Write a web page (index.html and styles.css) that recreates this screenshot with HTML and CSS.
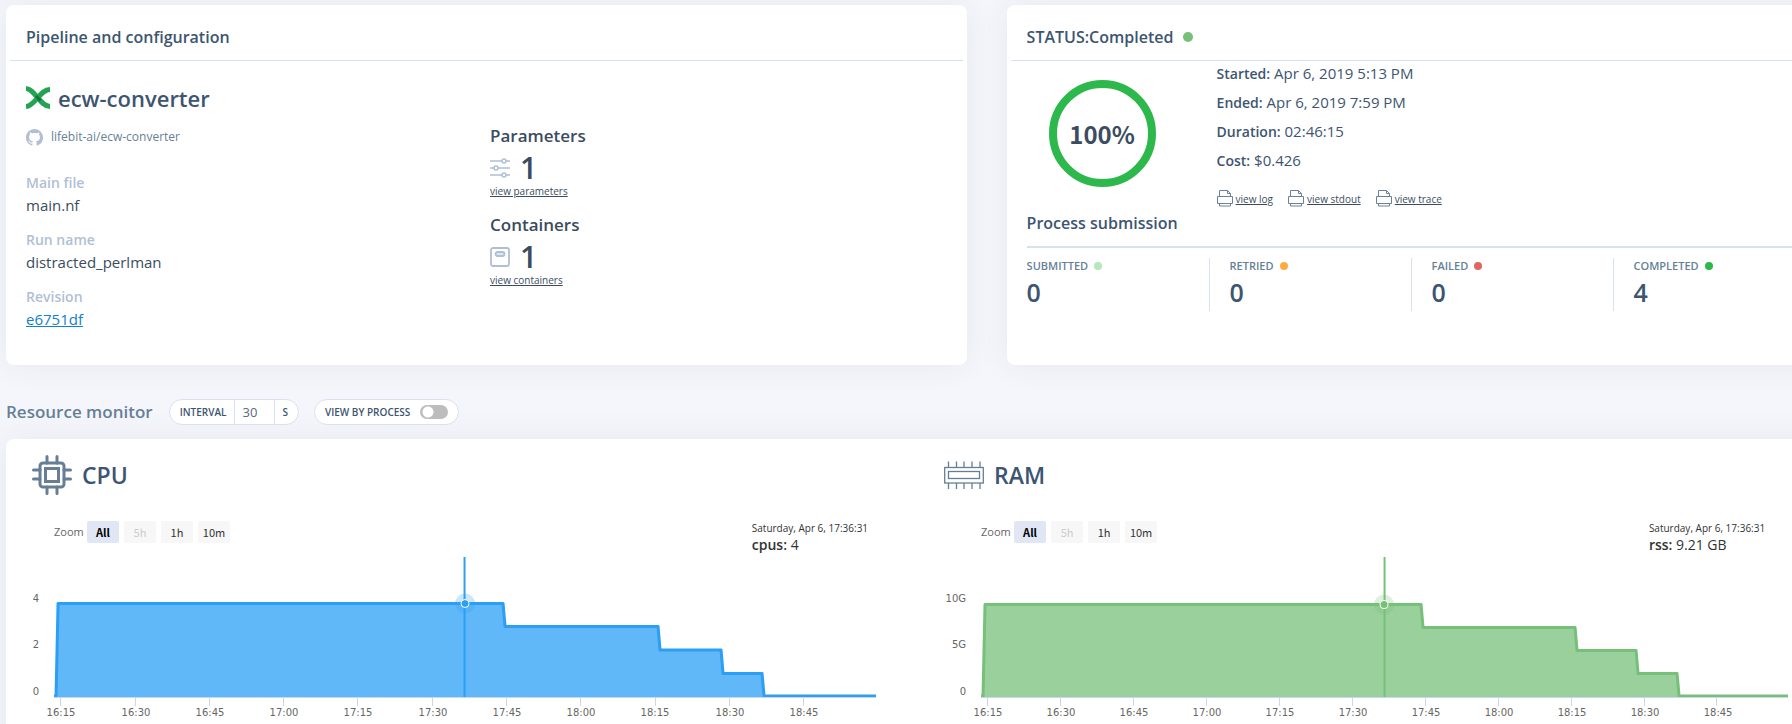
FILE: index.html
```html
<!DOCTYPE html>
<html lang="en">
<head>
<meta charset="utf-8">
<title>ecw-converter</title>
<link rel="stylesheet" href="styles.css">
</head>
<body>
<svg class="defs" aria-hidden="true">
  <symbol id="printer" viewBox="0 0 16 17">
    <path d="M2.500 6.500V.500H10.500L13.500 3.500V6.500M10.500 .500V3.500H13.500M.500 6.500H15.500V13.500H.500ZM2.500 13.500V16H13.500V13.500" fill="none" stroke="#6b829a"/>
  </symbol>
</svg>
<main class="page">
  <div class="cards">
    <section class="card">
      <header class="card-head"><h2>Pipeline and configuration</h2></header>
      <div class="pipeline">
        <div class="pipeline-info">
          <div class="name">
            <svg width="24" height="24" viewBox="0 0 24 24"><path d="M0 2.500C9 3 14 20.500 24 20.500M0 20.500C9 20 14 3.500 24 3.500" fill="none" stroke="#23a455" stroke-width="5"/><path d="M10 10L14.500 14.500" stroke="#14723a" stroke-width="3"/></svg>
            <h1>ecw-converter</h1>
          </div>
          <div class="repo">
            <svg width="17" height="17" viewBox="0 0 16 16" fill="#b0bfd4"><path d="M8 0C3.580 0 0 3.580 0 8c0 3.540 2.290 6.530 5.470 7.590.4.070.55-.17.55-.38 0-.19-.01-.82-.01-1.490-2.010.37-2.530-.49-2.690-.94-.09-.23-.48-.94-.82-1.130-.28-.15-.68-.52-.01-.53.63-.01 1.080.58 1.230.82.72 1.210 1.870.87 2.330.66.07-.52.28-.87.51-1.070-1.780-.2-3.640-.89-3.640-3.950 0-.87.31-1.590.82-2.150-.08-.2-.36-1.020.08-2.120 0 0 .67-.21 2.200.82.64-.18 1.320-.27 2-.27s1.360.09 2 .27c1.530-1.040 2.200-.82 2.200-.82.44 1.100.16 1.920.08 2.120.51.56.82 1.270.82 2.150 0 3.070-1.870 3.750-3.650 3.950.29.25.54.73.54 1.480 0 1.070-.01 1.930-.01 2.200 0 .21.15.46.55.38A8.010 8.010 0 0 0 16 8c0-4.420-3.580-8-8-8z"/></svg>
            <span>lifebit-ai/ecw-converter</span>
          </div>
          <dl class="facts">
            <dt>Main file</dt><dd>main.nf</dd>
            <dt>Run name</dt><dd>distracted_perlman</dd>
            <dt>Revision</dt><dd><a class="revision" href="#">e6751df</a></dd>
          </dl>
        </div>
        <div class="counts">
          <div class="count">
            <h3>Parameters</h3>
            <p class="count-value"><svg width="20" height="20" viewBox="0 0 20 20" fill="none" stroke="#b0bfd4" stroke-width="1.500"><path d="M0 3H12M16 3H20M0 10H4M8 10H20M0 17H12M16 17H20"/><circle cx="14" cy="3" r="2"/><circle cx="6" cy="10" r="2"/><circle cx="14" cy="17" r="2"/></svg>1</p>
            <a class="small-link" href="#">view parameters</a>
          </div>
          <div class="count">
            <h3>Containers</h3>
            <p class="count-value"><svg width="20" height="20" viewBox="0 0 20 20" fill="none" stroke="#b0bfd4" stroke-width="1.800"><rect x="1" y="1" width="18" height="18" rx="2"/><rect x="5.500" y="5" width="9" height="4" rx="2" fill="#dfe6f0"/></svg>1</p>
            <a class="small-link" href="#">view containers</a>
          </div>
        </div>
      </div>
    </section>

    <section class="card">
      <header class="card-head"><h2>STATUS:Completed</h2><span class="dot dot-status"></span></header>
      <div class="status">
        <div class="ring">100%</div>
        <div class="run">
          <p><b>Started:</b> Apr 6, 2019 5:13 PM</p>
          <p><b>Ended:</b> Apr 6, 2019 7:59 PM</p>
          <p><b>Duration:</b> 02:46:15</p>
          <p><b>Cost:</b> $0.426</p>
          <div class="logs">
            <a class="small-link" href="#"><svg width="16" height="17"><use href="#printer"/></svg>view log</a>
            <a class="small-link" href="#"><svg width="16" height="17"><use href="#printer"/></svg>view stdout</a>
            <a class="small-link" href="#"><svg width="16" height="17"><use href="#printer"/></svg>view trace</a>
          </div>
        </div>
      </div>
      <div class="submission">
        <h2>Process submission</h2>
        <ul class="stats">
          <li><span class="stat-label">SUBMITTED<i class="dot dot-submitted"></i></span><strong>0</strong></li>
          <li><span class="stat-label">RETRIED<i class="dot dot-retried"></i></span><strong>0</strong></li>
          <li><span class="stat-label">FAILED<i class="dot dot-failed"></i></span><strong>0</strong></li>
          <li><span class="stat-label">COMPLETED<i class="dot dot-completed"></i></span><strong>4</strong></li>
        </ul>
      </div>
    </section>
  </div>

  <div class="toolbar">
    <h2>Resource monitor</h2>
    <div class="pill interval"><label for="interval">INTERVAL</label><input id="interval" type="text" value="30"><span>S</span></div>
    <label class="pill process">VIEW BY PROCESS<input class="switch" type="checkbox"></label>
  </div>

  <section class="card monitors">
    <article class="monitor">
      <header class="monitor-head">
        <svg width="40" height="40" viewBox="0 0 40 40" fill="none" stroke="#667f96"><rect x="8" y="8" width="24" height="24" rx="3" stroke-width="3"/><rect x="13.500" y="13.500" width="13" height="13" stroke-width="3"/><path d="M15 8V1.500M25 8V1.500M15 32V38.500M25 32V38.500M8 15H1.500M8 24H1.500M32 15H38.500M32 24H38.500" stroke-width="3" stroke-linecap="round"/></svg>
        <h2>CPU</h2>
      </header>
      <div class="chart-bar cpu-bar">
        <div class="ranges"><span>Zoom</span><button class="active">All</button><button disabled>5h</button><button>1h</button><button>10m</button></div>
        <div class="readout"><small>Saturday, Apr 6, 17:36:31</small><p><b>cpus:</b> 4</p></div>
      </div>
      <svg class="chart cpu" viewBox="0 0 912 168" role="img" aria-label="CPU usage">
        <path class="area" d="M50 139.500L52 46.500H497L499 69.500H652L654 93H715L717 116.500H756L758 140H50Z"/>
        <path class="line" d="M48 139H50L52 46.500H497L499 69.500H652L654 93H715L717 116.500H756L758 139H870"/>
        <path class="axis" d="M48 140.500H870M54.500 141V149M129.500 141V149M203.500 141V149M277.500 141V149M351.500 141V149M426.500 141V149M500.500 141V149M574.500 141V149M649.500 141V149M723.500 141V149M797.500 141V149"/>
        <path class="cursor" d="M458.500 0V140"/>
        <circle class="halo" cx="459" cy="46.500" r="10"/><circle class="point" cx="459" cy="46.500" r="4"/>
        <g class="y-labels"><text x="33" y="45">4</text><text x="33" y="91">2</text><text x="33" y="138">0</text></g>
        <g class="x-labels"><text x="55" y="159">16:15</text><text x="130" y="159">16:30</text><text x="204" y="159">16:45</text><text x="278" y="159">17:00</text><text x="352" y="159">17:15</text><text x="427" y="159">17:30</text><text x="501" y="159">17:45</text><text x="575" y="159">18:00</text><text x="649" y="159">18:15</text><text x="724" y="159">18:30</text><text x="798" y="159">18:45</text></g>
      </svg>
    </article>
    <article class="monitor">
      <header class="monitor-head">
        <svg width="40" height="40" viewBox="0 0 40 40" fill="none" stroke="#667f96" stroke-width="1.300"><rect x=".7" y="12.500" width="38.600" height="15.500"/><rect x="4.500" y="16.500" width="31" height="7"/><path d="M4.500 12.500V6.500M12.500 12.500V6.500M20 12.500V6.500M28 12.500V6.500M36 12.500V6.500M4.500 28V34M12.500 28V34M20 28V34M28 28V34M36 28V34"/></svg>
        <h2>RAM</h2>
      </header>
      <div class="chart-bar ram-bar">
        <div class="ranges"><span>Zoom</span><button class="active">All</button><button disabled>5h</button><button>1h</button><button>10m</button></div>
        <div class="readout"><small>Saturday, Apr 6, 17:36:31</small><p><b>rss:</b> 9.21 GB</p></div>
      </div>
      <svg class="chart ram" viewBox="0 0 912 168" role="img" aria-label="RAM usage">
        <path class="area" d="M65 139.500L67 47.500H503L505 70.500H657L659 93.500H718L720 116.500H759L761 140H65Z"/>
        <path class="line" d="M63 139H65L67 47.500H503L505 70.500H657L659 93.500H718L720 116.500H759L761 139H870"/>
        <path class="axis" d="M63 140.500H870M69.500 141V149M142.500 141V149M215.500 141V149M288.500 141V149M361.500 141V149M434.500 141V149M507.500 141V149M580.500 141V149M653.500 141V149M726.500 141V149M798.500 141V149"/>
        <path class="cursor" d="M466.500 0V140"/>
        <circle class="halo" cx="466" cy="47.500" r="10"/><circle class="point" cx="466" cy="47.500" r="4"/>
        <g class="y-labels"><text x="48" y="45">10G</text><text x="48" y="91">5G</text><text x="48" y="138">0</text></g>
        <g class="x-labels"><text x="70" y="159">16:15</text><text x="143" y="159">16:30</text><text x="216" y="159">16:45</text><text x="289" y="159">17:00</text><text x="362" y="159">17:15</text><text x="435" y="159">17:30</text><text x="508" y="159">17:45</text><text x="581" y="159">18:00</text><text x="654" y="159">18:15</text><text x="727" y="159">18:30</text><text x="800" y="159">18:45</text></g>
      </svg>
    </article>
  </section>
</main>
</body>
</html>
```
FILE: styles.css
```css
* { box-sizing: border-box; }
html { overflow: hidden; }
body {
  margin: 0;
  background: #f5f6fb;
  color: #3d5571;
  font: 15px/20px "Open Sans", "Noto Sans", sans-serif;
}
h1, h2, h3, p, dl, dd, ul { margin: 0; padding: 0; }
h1, h2, h3, b { font-weight: 600; }
svg { flex: none; display: block; }
.defs { position: absolute; width: 0; height: 0; }

.page { width: 110%; padding: 5px 4px 0 6px; }
.cards { display: grid; grid-template-columns: 1fr 1fr; gap: 40px; }
.card {
  background: #fff;
  border-radius: 8px;
  box-shadow: 0 0 32px rgba(60, 60, 90, .07);
}
.cards .card { min-height: 360px; }
.card-head {
  display: flex;
  align-items: center;
  gap: 10px;
  height: 56px;
  margin: 0 4px;
  padding: 8px 16px 0;
  border-bottom: 1px solid #d9e1f0;
}
.card-head h2, .submission h2 { font-size: 16px; line-height: 24px; }
.dot { display: inline-block; width: 8px; height: 8px; border-radius: 50%; }
.dot-status { width: 10px; height: 10px; background: #76c079; }
.dot-submitted { background: #b4e8be; }
.dot-retried { background: #ffab40; }
.dot-failed { background: #e06464; }
.dot-completed { background: #2db84b; }

.pipeline { display: grid; grid-template-columns: 464px 1fr; padding: 20px 20px 0; }
.name { display: flex; align-items: center; gap: 8px; height: 34px; }
.name h1 { font-size: 22px; line-height: 32px; }
.repo {
  display: flex;
  align-items: center;
  gap: 8px;
  margin-top: 12px;
  color: #667f96;
  font-size: 12px;
}
.facts { margin-top: 25px; color: #3b4c60; font-size: 15px; line-height: 22px; }
.facts dt { color: #b0bfd4; font-size: 14px; font-weight: 600; }
.facts dd { margin-bottom: 13px; }
.revision { color: #1180d0; }
.counts { padding-top: 43px; color: #3b4c60; }
.count { height: 89px; }
.count h3 { font-size: 17px; line-height: 24px; }
.count-value {
  display: flex;
  align-items: center;
  gap: 10px;
  height: 40px;
  font-size: 30px;
  font-weight: 600;
}
.small-link { color: #3b4c60; font-size: 10px; line-height: 14px; }
.count .small-link { display: block; margin-top: -4px; }

.status { display: grid; grid-template-columns: 190px 1fr; padding: 0 20px; }
.ring {
  display: grid;
  place-items: center;
  width: 107px;
  height: 107px;
  margin: 19px 0 0 22px;
  border: 8px solid #2db84b;
  border-radius: 50%;
  color: #3b4c60;
  font: 700 24px/32px "Noto Sans CJK SC", sans-serif;
}
.run { margin-top: -2px; font-size: 15px; line-height: 29px; }
.run b { font-size: 14px; }
.logs { display: flex; gap: 15px; margin-top: 15px; }
.logs a { display: flex; align-items: center; gap: 3px; }
.submission { padding: 4px 0 0 20px; }
.submission h2 { padding-bottom: 11px; border-bottom: 2px solid #d9e1f0; }
.stats { display: flex; margin: 10px 0 0 -20px; list-style: none; }
.stats li { flex: 0 0 202px; padding-left: 20px; }
.stats li + li { border-left: 1px solid #d9e1f0; }
.stat-label {
  display: flex;
  align-items: center;
  gap: 6px;
  height: 16px;
  color: #667f96;
  font-size: 11px;
  font-weight: 600;
}
.stats strong { display: block; font-size: 25px; font-weight: 600; line-height: 37px; }

.toolbar { display: flex; align-items: center; height: 26px; margin: 34px 0 14px; }
.toolbar h2 { margin-right: 16px; color: #667f96; font-size: 17px; line-height: 26px; }
.pill {
  display: flex;
  align-items: center;
  height: 26px;
  overflow: hidden;
  border: 1px solid #d9e1f0;
  border-radius: 13px;
  background: #fff;
  font-size: 10px;
  font-weight: 600;
}
.interval { margin-right: 15px; padding: 0 10px 0 10px; }
.interval input {
  width: 41px;
  height: 26px;
  margin: 0 7px 0 8px;
  padding: 0 7px;
  border: 1px solid #d9e1f0;
  background: #fff;
  color: #56697e;
  font: 13px "Open Sans", "Noto Sans", sans-serif;
}
.process { gap: 10px; padding: 0 10px; }
.switch {
  appearance: none;
  width: 28px;
  height: 14px;
  margin: 0;
  border-radius: 7px;
  background: radial-gradient(circle at 8px 7px, #fff 5px, #bdbdbd 6px);
}

.monitors { display: grid; grid-template-columns: 912fr 912fr 137fr; height: 320px; }
.monitor-head { display: flex; align-items: center; gap: 10px; padding: 16px 0 0 26px; }
.monitor-head h2 { font-size: 23px; line-height: 36px; }
.chart-bar {
  display: flex;
  justify-content: space-between;
  height: 62px;
  padding: 26px 50px 0 48px;
}
.ram-bar { padding: 26px 65px 0 63px; }
.ranges {
  display: flex;
  gap: 5px;
  height: 22px;
  color: #666;
  font: 11px/22px "Noto Sans CJK SC", sans-serif;
}
.ranges span { width: 28px; font-family: "Open Sans", "Noto Sans", sans-serif; }
.ranges button {
  width: 32px;
  padding: 0;
  border: 0;
  border-radius: 2px;
  background: #f7f7f7;
  color: #333;
  font: inherit;
}
.ranges .active { background: #e0e6f3; color: #000; font-weight: 700; }
.ranges button:disabled { color: #ccc; }
.readout { color: #333; }
.readout small { display: block; font-size: 10px; line-height: 14px; }
.readout p { font-size: 14px; line-height: 20px; }

.chart { width: 100%; height: auto; }
.cpu { --line: #2b9ff5; --area: #61b8f9; }
.ram { --line: #76c079; --area: #99d09b; }
.area { fill: var(--area); }
.line { fill: none; stroke: var(--line); stroke-width: 3; stroke-linejoin: round; }
.axis { fill: none; stroke: #ccd6eb; }
.cursor { stroke: var(--line); stroke-width: 2; }
.halo { fill: var(--line); fill-opacity: .25; }
.point { fill: var(--line); stroke: #fff; }
.chart text { fill: #666; font: 10px "DejaVu Sans", sans-serif; }
.y-labels text { text-anchor: end; }
.x-labels text { text-anchor: middle; }
```
